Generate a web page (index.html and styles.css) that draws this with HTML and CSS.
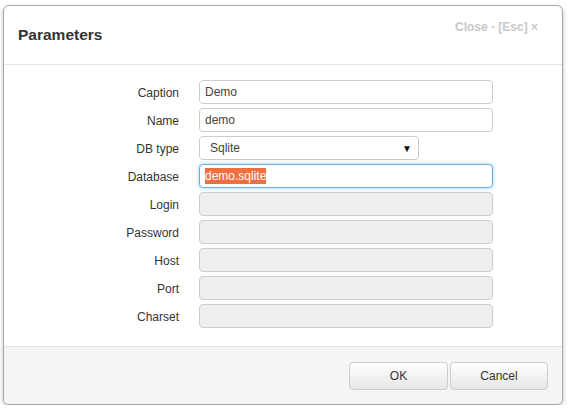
FILE: index.html
```html
<!DOCTYPE html>
<html>
<head>
<meta charset="utf-8">
<link rel="stylesheet" href="styles.css">
</head>
<body>
<div class="dialog">
  <div class="header">
    <h3 class="title">Parameters</h3>
    <span class="close">Close - [Esc] ×</span>
  </div>
  <div class="body">
    <label class="lbl">Caption</label><div class="field">Demo</div>
    <label class="lbl">Name</label><div class="field">demo</div>
    <label class="lbl">DB type</label><div class="select"><span>Sqlite</span><span class="arrow">▼</span></div>
    <label class="lbl">Database</label><div class="field focus"><span class="sel">demo.sqlite</span></div>
    <label class="lbl">Login</label><div class="field disabled"></div>
    <label class="lbl">Password</label><div class="field disabled"></div>
    <label class="lbl">Host</label><div class="field disabled"></div>
    <label class="lbl">Port</label><div class="field disabled"></div>
    <label class="lbl">Charset</label><div class="field disabled"></div>
  </div>
  <div class="footer">
    <button class="btn ok">OK</button>
    <button class="btn">Cancel</button>
  </div>
</div>
</body>
</html>
```
FILE: styles.css
```css
html, body { margin: 0; padding: 0; background: #fff; }
body {
  font-family: "Liberation Sans", Arial, sans-serif;
  font-size: 12px;
  color: #333;
  padding: 5px 0 0 3px;
}
.dialog {
  width: 558px;
  height: 398px;
  border: 1px solid #a8a8a8;
  border-radius: 6px;
  box-shadow: 0 2px 4px rgba(0,0,0,0.25);
  display: flex;
  flex-direction: column;
  overflow: hidden;
  background: #fff;
}
.header {
  height: 58px;
  border-bottom: 1px solid #e5e5e5;
  display: flex;
  justify-content: space-between;
  align-items: flex-start;
  padding: 0 24px 0 14px;
}
.title {
  margin: 20px 0 0 0;
  font-size: 15.5px;
  font-weight: bold;
  color: #333;
  line-height: 18px;
}
.close {
  margin-top: 14px;
  font-weight: bold;
  font-size: 12px;
  color: #c8c8c8;
  line-height: 14px;
}
.body {
  flex: 1;
  display: grid;
  grid-template-columns: 175px 294px;
  column-gap: 20px;
  row-gap: 4px;
  align-content: start;
  padding-top: 15px;
}
.lbl {
  text-align: right;
  line-height: 24px;
  height: 24px;
  padding-top: 1px;
  box-sizing: border-box;
  color: #333;
}
.field {
  box-sizing: border-box;
  height: 24px;
  border: 1px solid #ccc;
  border-radius: 4px;
  padding: 0 5px;
  line-height: 22px;
  color: #444;
  background: #fff;
}
.field.disabled { background: #eee; }
.field.focus {
  border-color: #66afe9;
  box-shadow: 0 0 4px rgba(102,175,233,0.6);
}
.sel { background: #ef6f3e; color: #fff; padding: 1px 0; }
.select {
  box-sizing: border-box;
  width: 220px;
  height: 24px;
  border: 1px solid #ccc;
  border-radius: 4px;
  padding: 0 6px 0 10px;
  display: flex;
  justify-content: space-between;
  align-items: center;
  color: #444;
  background: #fff;
}
.arrow { font-size: 10px; color: #111; }
.footer {
  height: 58px;
  border-top: 1px solid #e5e5e5;
  background: #f5f5f5;
  display: flex;
  justify-content: flex-end;
  align-items: flex-start;
  gap: 2px;
  padding: 15px 14px 0 0;
  box-sizing: border-box;
}
.btn {
  width: 99px;
  height: 28px;
  border: 1px solid #ccc;
  border-radius: 4px;
  background: linear-gradient(#fff, #e6e6e6);
  font-family: "Liberation Sans", Arial, sans-serif;
  font-size: 12px;
  color: #333;
}
.btn + .btn { width: 98px; }
```
